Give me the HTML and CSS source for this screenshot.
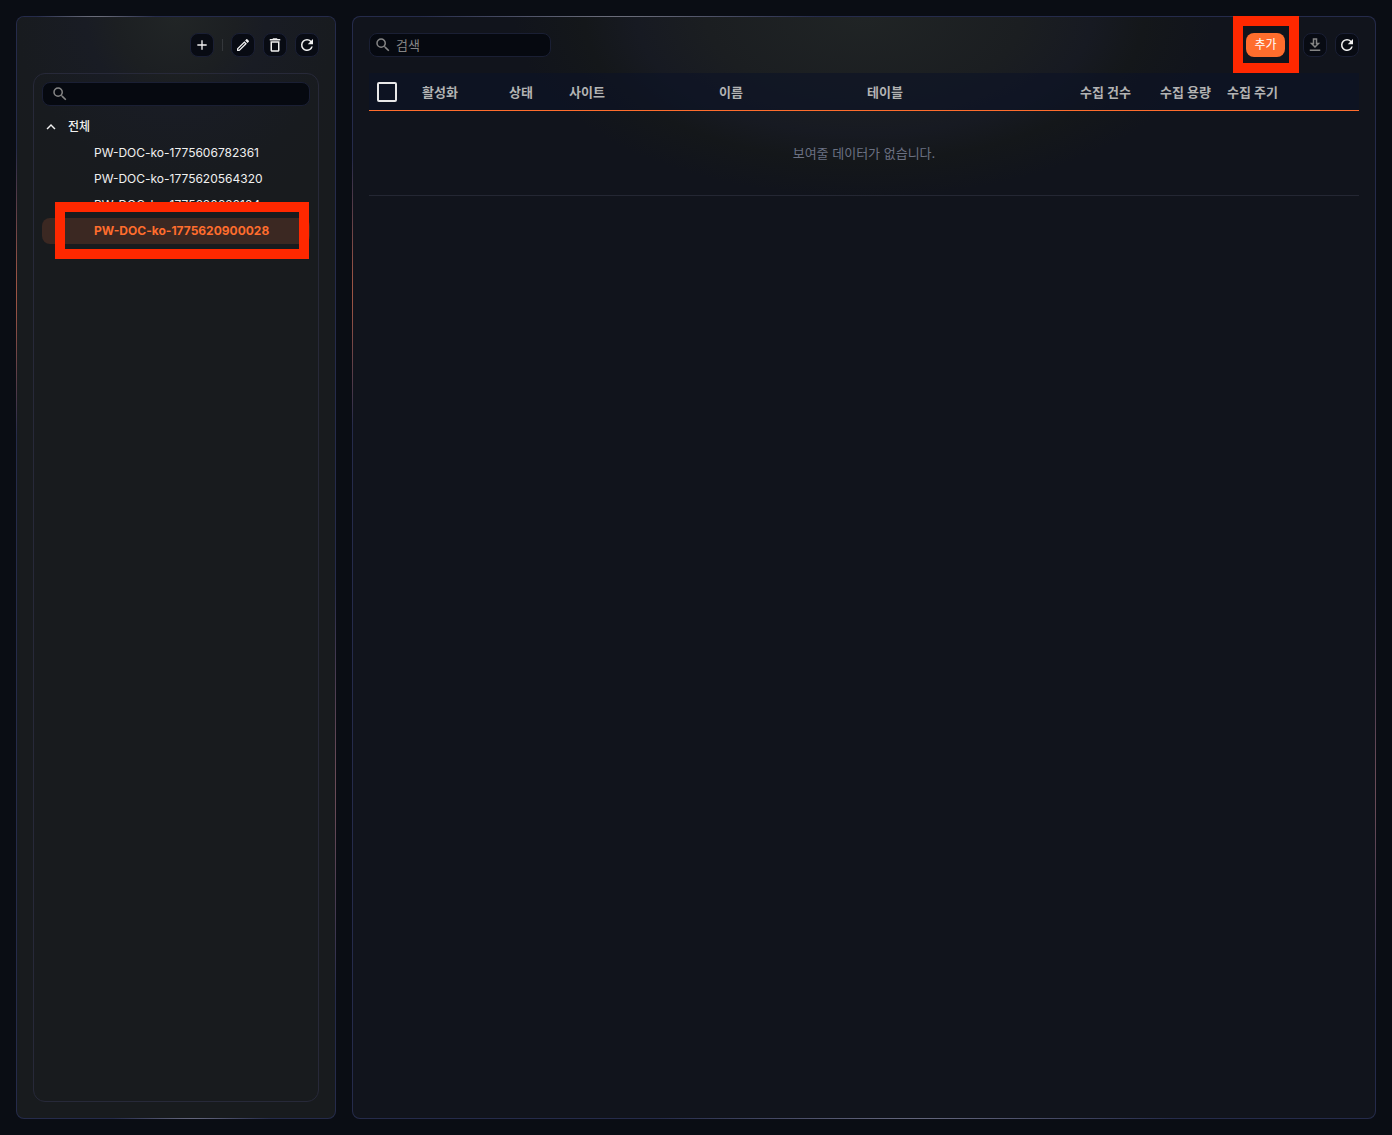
FILE: index.html
```html
<!DOCTYPE html>
<html lang="ko">
<head>
<meta charset="utf-8">
<title>수집</title>
<link rel="stylesheet" href="styles.css">
</head>
<body>
<svg class="sprite" aria-hidden="true">
  <symbol id="search" viewBox="0 0 24 24"><path d="M15.5 14h-.79l-.28-.27A6.47 6.47 0 0 0 16 9.5 6.5 6.5 0 1 0 9.5 16c1.61 0 3.09-.59 4.23-1.57l.27.28v.79l5 4.99L20.490 19zm-6 0C7.010 14 5 11.990 5 9.500S7.010 5 9.500 5 14 7.010 14 9.500 11.990 14 9.500 14"/></symbol>
  <symbol id="add" viewBox="0 0 24 24"><path d="M19 13h-6v6h-2v-6H5v-2h6V5h2v6h6z"/></symbol>
  <symbol id="edit" viewBox="0 0 24 24"><path d="m14.060 9.020.92.92L5.920 19H5v-.92zM17.660 3c-.25 0-.51.1-.7.290l-1.830 1.830 3.750 3.750 1.830-1.830c.39-.39.39-1.020 0-1.410l-2.340-2.340c-.2-.2-.45-.29-.71-.29m-3.600 3.190L3 17.250V21h3.750L17.810 9.940z"/></symbol>
  <symbol id="delete" viewBox="0 0 24 24"><path d="M6 19c0 1.100.9 2 2 2h8c1.100 0 2-.9 2-2V7H6zM8 9h8v10H8zm7.500-5-1-1h-5l-1 1H5v2h14V4z"/></symbol>
  <symbol id="refresh" viewBox="0 0 24 24"><path d="M17.650 6.350A7.960 7.960 0 0 0 12 4a8 8 0 1 0 7.730 10h-2.080A5.990 5.990 0 0 1 12 18a6 6 0 1 1 0-12c1.660 0 3.140.69 4.220 1.780L13 11h7V4z"/></symbol>
  <symbol id="download" viewBox="0 0 24 24"><path d="M19 9h-4V3H9v6H5l7 7zm-8 2V5h2v6h1.170L12 13.170 9.830 11zm-6 7h14v2H5z"/></symbol>
  <symbol id="chevron" viewBox="0 0 24 24"><path d="m12 8-6 6 1.410 1.410L12 10.830l4.590 4.580L18 14z"/></symbol>
</svg>
<div class="app">
  <aside class="panel side">
    <div class="toolbar side-tools">
      <button class="icon-btn" type="button" aria-label="추가"><svg class="small"><use href="#add"/></svg></button>
      <span class="divider"></span>
      <button class="icon-btn" type="button" aria-label="수정"><svg class="small"><use href="#edit"/></svg></button>
      <button class="icon-btn" type="button" aria-label="삭제"><svg><use href="#delete"/></svg></button>
      <button class="icon-btn" type="button" aria-label="새로고침"><svg><use href="#refresh"/></svg></button>
    </div>
    <nav class="tree">
      <label class="search tree-search"><svg><use href="#search"/></svg><input type="text" aria-label="그룹 검색"></label>
      <button class="root" type="button" aria-expanded="true"><svg><use href="#chevron"/></svg>전체</button>
      <ul class="items">
        <li><a class="item" href="#">PW-DOC-ko-1775606782361</a></li>
        <li><a class="item" href="#">PW-DOC-ko-1775620564320</a></li>
        <li><a class="item" href="#">PW-DOC-ko-1775620620184</a></li>
        <li class="marked"><a class="item selected" href="#">PW-DOC-ko-1775620900028</a></li>
      </ul>
    </nav>
  </aside>
  <main class="panel main">
    <div class="toolbar">
      <label class="search main-search"><svg><use href="#search"/></svg><input type="text" placeholder="검색" aria-label="검색"></label>
      <div class="toolbar actions">
        <span class="marked"><button class="add-btn" type="button">추가</button></span>
        <button class="icon-btn" type="button" aria-label="내려받기" disabled><svg><use href="#download"/></svg></button>
        <button class="icon-btn" type="button" aria-label="새로고침"><svg><use href="#refresh"/></svg></button>
      </div>
    </div>
    <table class="grid">
      <colgroup><col class="c-check"><col class="c-active"><col class="c-state"><col class="c-site"><col class="c-name"><col class="c-table"><col class="c-count"><col class="c-size"><col class="c-cycle"></colgroup>
      <thead>
        <tr>
          <th><input class="check" type="checkbox" aria-label="전체 선택"></th>
          <th>활성화</th><th>상태</th><th>사이트</th><th>이름</th><th>테이블</th>
          <th class="end">수집 건수</th><th class="end">수집 용량</th><th>수집 주기</th>
        </tr>
      </thead>
      <tbody><tr><td class="empty" colspan="9">보여줄 데이터가 없습니다.</td></tr></tbody>
    </table>
  </main>
</div>
</body>
</html>
```
FILE: styles.css
```css
* { box-sizing: border-box; }

body {
  margin: 0;
  background: #0a0d14;
  color: #f0f0f0;
  font: 12px/16px Inter, "Noto Sans CJK KR", sans-serif;
}

button, input { font: inherit; color: inherit; }
button { padding: 0; cursor: pointer; }
svg { width: 18px; height: 18px; fill: currentColor; flex: none; }
.small { width: 16px; height: 16px; }
.sprite { position: absolute; width: 0; height: 0; }

.app {
  display: grid;
  grid-template-columns: 320px minmax(0, 1fr);
  gap: 16px;
  min-height: 100vh;
  padding: 16px;
}

.panel {
  --line: #252b4b;
  display: flex;
  flex-direction: column;
  gap: 16px;
  padding: 16px;
  border: 1px solid transparent;
  border-radius: 8px;
}

.side {
  background:
    radial-gradient(circle at 50% 0, #212526 0, #1c1f22 60px, #191c24 90px, #181b1f 160px, #181b1e00 200px) padding-box,
    linear-gradient(#181b1e, #181b1e) padding-box,
    radial-gradient(60px 4px at 25% 0, #737580, #252b4b00) border-box,
    radial-gradient(80px 4px at 55% 100%, #6b6d83, #252b4b00) border-box,
    radial-gradient(4px 145px at 0 25%, #ad5a43, #252b4b00) border-box,
    radial-gradient(4px 210px at 100% 70%, #74505a, #252b4b00) border-box,
    linear-gradient(var(--line), var(--line)) border-box;
}

.main {
  background:
    radial-gradient(350px 180px at 50% 0, #202425 0, #1b1e21 45%, #171a22 65%, #14171a 80%, #11141c00 100%) padding-box,
    linear-gradient(#11141c, #11141c) padding-box,
    radial-gradient(200px 4px at 26% 0, #737580, #252b4b00) border-box,
    radial-gradient(260px 4px at 55% 100%, #6b6d83, #252b4b00) border-box,
    radial-gradient(4px 135px at 0 25%, #ad5a43, #252b4b00) border-box,
    radial-gradient(4px 210px at 100% 70%, #74505a, #252b4b00) border-box,
    linear-gradient(var(--line), var(--line)) border-box;
}

.toolbar { display: flex; align-items: center; gap: 8px; }
.side-tools { justify-content: flex-end; }
.actions { margin-left: auto; }

.icon-btn {
  display: grid;
  place-items: center;
  width: 24px;
  height: 24px;
  border: 1px solid #1a1f34;
  border-radius: 8px;
  background: #080b13;
}
.icon-btn:disabled { color: #858585; }

.divider { width: 1px; height: 12px; background: #34373b; }

.actions .icon-btn:disabled { margin-left: 10px; }

.search {
  display: flex;
  align-items: center;
  gap: 4px;
  height: 24px;
  padding: 0 4px;
  border: 1px solid #1a1f34;
  border-radius: 8px;
  background: #060910;
  color: #858585;
}
.search input {
  min-width: 0;
  flex: 1;
  padding: 0;
  border: 0;
  outline: 0;
  background: transparent;
}
.search input::placeholder { color: #858585; }
.main-search { width: 182px; font-size: 13px; }
.tree-search { padding: 0 8px; }

.tree {
  flex: 1;
  display: flex;
  flex-direction: column;
  padding: 8px;
  border: 1px solid #272939;
  border-radius: 12px;
}

.root {
  display: flex;
  align-items: center;
  gap: 8px;
  height: 26px;
  margin-top: 8px;
  border: 0;
  background: none;
  font-weight: 500;
}

.items { margin: 0; padding: 0; list-style: none; }
.item {
  display: block;
  padding: 5px 8px 5px 52px;
  border-radius: 8px;
  color: inherit;
  text-decoration: none;
}
.selected { background: #3b2822; color: #ff6d2d; font-weight: 700; }

/* Highlight frames laid over the controls they point at */
.marked { position: relative; display: block; }
.marked::after {
  content: "";
  position: absolute;
  border: 10px solid #ff2800;
  pointer-events: none;
}
.items .marked::after { inset: -16px 1px -15px 13px; }
.actions .marked::after { inset: -17px -14px -16px -13px; }

.add-btn {
  display: block;
  width: 39px;
  height: 24px;
  border: 0;
  border-radius: 8px;
  background: #ff6d2d;
  color: #fff;
}

.grid { width: 100%; border-collapse: collapse; table-layout: fixed; font-size: 13px; }
.grid thead { background: rgb(12 19 39 / 60%); }
.grid th {
  height: 37px;
  padding: 1px 8px 0;
  border-bottom: 1px solid #ff6d2d;
  color: #b3b3b3;
  font-weight: 700;
  text-align: left;
  white-space: nowrap;
}
.grid .end { text-align: right; }
.c-check { width: 45px; }
.c-active { width: 87px; }
.c-state { width: 60px; }
.c-site { width: 150px; }
.c-name { width: 148px; }
.c-count { width: 90px; }
.c-size { width: 80px; }
.c-cycle { width: 140px; }

.check {
  appearance: none;
  display: block;
  width: 20px;
  height: 20px;
  margin: 0;
  border: 2px solid #e8e8e8;
  border-radius: 2px;
}
.empty {
  height: 85px;
  padding: 0;
  border-bottom: 1px solid #242733;
  color: #6b7183;
  text-align: center;
}
```
